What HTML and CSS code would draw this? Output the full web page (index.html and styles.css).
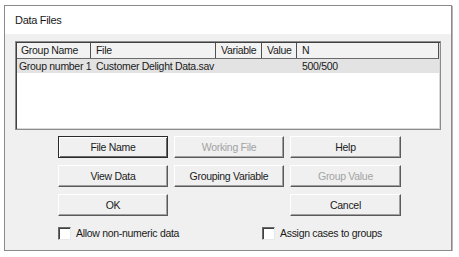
FILE: index.html
```html
<!DOCTYPE html>
<html lang="en">
<head>
    <meta charset="UTF-8">
    <title>Data Files</title>
    <link rel="stylesheet" href="styles.css">
</head>
<body>
    <div class="dialog">
        <div class="dialog-title">Data Files</div>
        <div class="dialog-body">
            <div class="list-box">
                <div class="list-head">
                    <div class="col col-group">Group Name</div>
                    <div class="col col-file">File</div>
                    <div class="col col-var">Variable</div>
                    <div class="col col-value">Value</div>
                    <div class="col col-n">N</div>
                </div>
                <div class="list-row selected">
                    <div class="col col-group">Group number 1</div>
                    <div class="col col-file">Customer Delight Data.sav</div>
                    <div class="col col-var"></div>
                    <div class="col col-value"></div>
                    <div class="col col-n">500/500</div>
                </div>
            </div>

            <div class="button-grid">
                <button class="btn btn-default">File Name</button>
                <button class="btn" disabled>Working File</button>
                <button class="btn">Help</button>
                <button class="btn">View Data</button>
                <button class="btn">Grouping Variable</button>
                <button class="btn" disabled>Group Value</button>
                <button class="btn">OK</button>
                <span></span>
                <button class="btn">Cancel</button>
            </div>

            <div class="check-row">
                <label class="check check-left"><span class="box"></span>Allow non-numeric data</label>
                <label class="check check-right"><span class="box"></span>Assign cases to groups</label>
            </div>
        </div>
    </div>
</body>
</html>
```

FILE: styles.css
```css
body {
    margin: 0;
    background: #ffffff;
    font-family: "Liberation Sans", Arial, sans-serif;
    font-size: 10.5px;
    letter-spacing: -0.3px;
    color: #1a1a1a;
}

.dialog {
    margin: 5px 0 0 4px;
    width: 446px;
    height: 244px;
    border: 1px solid #8a8a8a;
    box-shadow: 1px 1px 0 #b5b5b5;
    display: flex;
    flex-direction: column;
}

.dialog-title {
    height: 28px;
    line-height: 28px;
    padding-left: 10px;
    font-size: 11px;
    background: #ffffff;
}

.dialog-body {
    flex: 1;
    background: #f0f0f0;
    padding: 7px 10px 0 10px;
}

/* lista de grupos */
.list-box {
    height: 85px;
    background: #ffffff;
    border: 1px solid #8c8c8c;
    box-shadow: inset 1px 1px 0 #404040, inset -1px -1px 0 #d8d8d8;
    padding: 1px;
}

.list-head,
.list-row {
    display: flex;
}

.list-head {
    height: 15px;
    line-height: 15px;
    background: #f2f2f2;
    border-bottom: 1px solid #6a6a6a;
    border-right: 1px solid #505050;
}

.list-head .col {
    border-right: 1px solid #505050;
}

.list-head .col:last-child {
    border-right: none;
}

.list-row {
    height: 14px;
    line-height: 14px;
}

.list-row.selected {
    background: #e3e3e3;
}

.col {
    box-sizing: border-box;
    padding-left: 5px;
    white-space: nowrap;
}

.list-head .col-group { padding-left: 4px; }
.list-row .col-group { padding-left: 2px; }

.col-group { width: 74px; }
.col-file { width: 125px; }
.col-var { width: 46px; }
.col-value { width: 35px; }
.col-n { flex: 1; }

/* botoes */
.button-grid {
    margin: 6px 0 0 43px;
    display: grid;
    grid-template-columns: 110px 110px 111px;
    grid-auto-rows: 22px;
    column-gap: 6px;
    row-gap: 7px;
}

.btn {
    font-family: inherit;
    font-size: 10.5px;
    letter-spacing: -0.3px;
    color: #1a1a1a;
    background: #f0f0f0;
    border: 1px solid;
    border-color: #ffffff #5a5a5a #5a5a5a #ffffff;
    box-shadow: inset -1px -1px 0 #a0a0a0;
    padding: 0;
}

.btn:disabled {
    color: #a3a3a3;
}

.btn-default {
    border: 1px solid #2a2a2a;
    box-shadow: inset 1px 1px 0 #ffffff, inset -1px -1px 0 #6a6a6a;
}

/* caixas de selecao */
.check-row {
    margin: 11px 0 0 43px;
    display: flex;
    height: 13px;
    line-height: 13px;
}

.check {
    display: flex;
    align-items: center;
}

.check-left {
    width: 204px;
}

.box {
    width: 11px;
    height: 11px;
    background: #ffffff;
    border: 1px solid;
    border-color: #6a6a6a #e8e8e8 #e8e8e8 #6a6a6a;
    box-shadow: inset 1px 1px 0 #404040;
    margin-right: 5px;
}
```
